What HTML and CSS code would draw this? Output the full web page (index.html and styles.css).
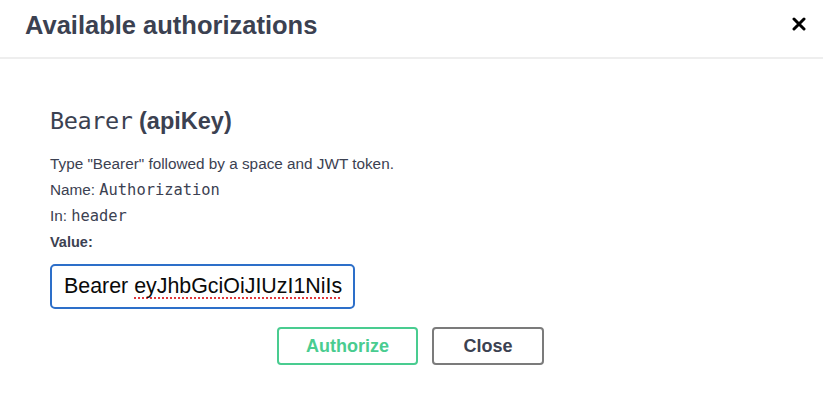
FILE: index.html
```html
<!DOCTYPE html>
<html>
<head>
<meta charset="utf-8">
<link rel="stylesheet" href="styles.css">
</head>
<body>
<div class="modal">
  <div class="modal-header">
    <h3 class="title">Available authorizations</h3>
    <button class="close-x" aria-label="Close">
      <svg width="14" height="14" viewBox="0 0 14 14"><path d="M2 2 L12 12 M12 2 L2 12" stroke="#000" stroke-width="3" stroke-linecap="round"/></svg>
    </button>
  </div>
  <div class="modal-body">
    <h4 class="scheme"><code class="mono">Bearer</code> <span>(apiKey)</span></h4>
    <p class="line">Type "Bearer" followed by a space and JWT token.</p>
    <p class="line">Name: <code class="code">Authorization</code></p>
    <p class="line">In: <code class="code">header</code></p>
    <label class="value-label">Value:</label>
    <div class="input"><span>Bearer <span class="spell">eyJhbGciOiJIUzI1NiIs</span></span></div>
    <div class="actions">
      <button class="btn authorize">Authorize</button>
      <button class="btn close">Close</button>
    </div>
  </div>
</div>
</body>
</html>
```
FILE: styles.css
```css
* { box-sizing: border-box; }
html, body { margin: 0; padding: 0; background: #fff; }
body { font-family: "Liberation Sans", Arial, sans-serif; color: #3b4151; width: 823px; height: 414px; overflow: hidden; }
.modal { width: 823px; }
.modal-header {
  display: flex; align-items: center; justify-content: space-between;
  height: 59px; padding: 0 17px 6px 25px;
  border-bottom: 2px solid #eeeeee;
}
.title { margin: 0; font-size: 25.5px; font-weight: bold; color: #3b4151; }
.close-x { border: 0; background: none; padding: 0; width: 14px; height: 14px; display: flex; margin-top: -3px; }
.modal-body { padding: 47px 0 0 50px; }
.scheme { margin: 0; font-size: 23.5px; font-weight: bold; color: #3b4151; line-height: 30px; }
.mono { font-family: "DejaVu Sans Mono", monospace; font-weight: normal; font-size: 23.5px; letter-spacing: -0.4px; color: #3b4151; }
.line { margin: 0; font-size: 15.3px; line-height: 26px; color: #3b4151; }
.scheme + .line { margin-top: 15px; }
.code { font-family: "DejaVu Sans Mono", monospace; font-size: 15.4px; color: #3b4151; }
.value-label { display: block; font-size: 14.5px; font-weight: bold; line-height: 26px; color: #3b4151; }
.input {
  margin-top: 9px;
  width: 305px; height: 45px;
  border: 2px solid #2d6fc9; border-radius: 5px;
  padding: 0 0 0 12px;
  display: flex; align-items: center;
  font-size: 21.4px; color: #0a0a0a;
  white-space: nowrap; overflow: hidden;
}
.spell { text-decoration: underline dotted #e0373b; text-underline-offset: 4px; text-decoration-thickness: 1.5px; }
.actions { display: flex; gap: 14px; margin: 18px 0 0 227px; }
.btn {
  height: 38px; border-radius: 4px; background: #fff;
  font-family: "Liberation Sans", Arial, sans-serif; font-weight: bold; font-size: 18px;
  cursor: pointer;
}
.authorize { width: 141px; border: 2px solid #49cc90; color: #49cc90; }
.close { width: 112px; border: 2px solid #7b7b7b; color: #3b4151; }
```
